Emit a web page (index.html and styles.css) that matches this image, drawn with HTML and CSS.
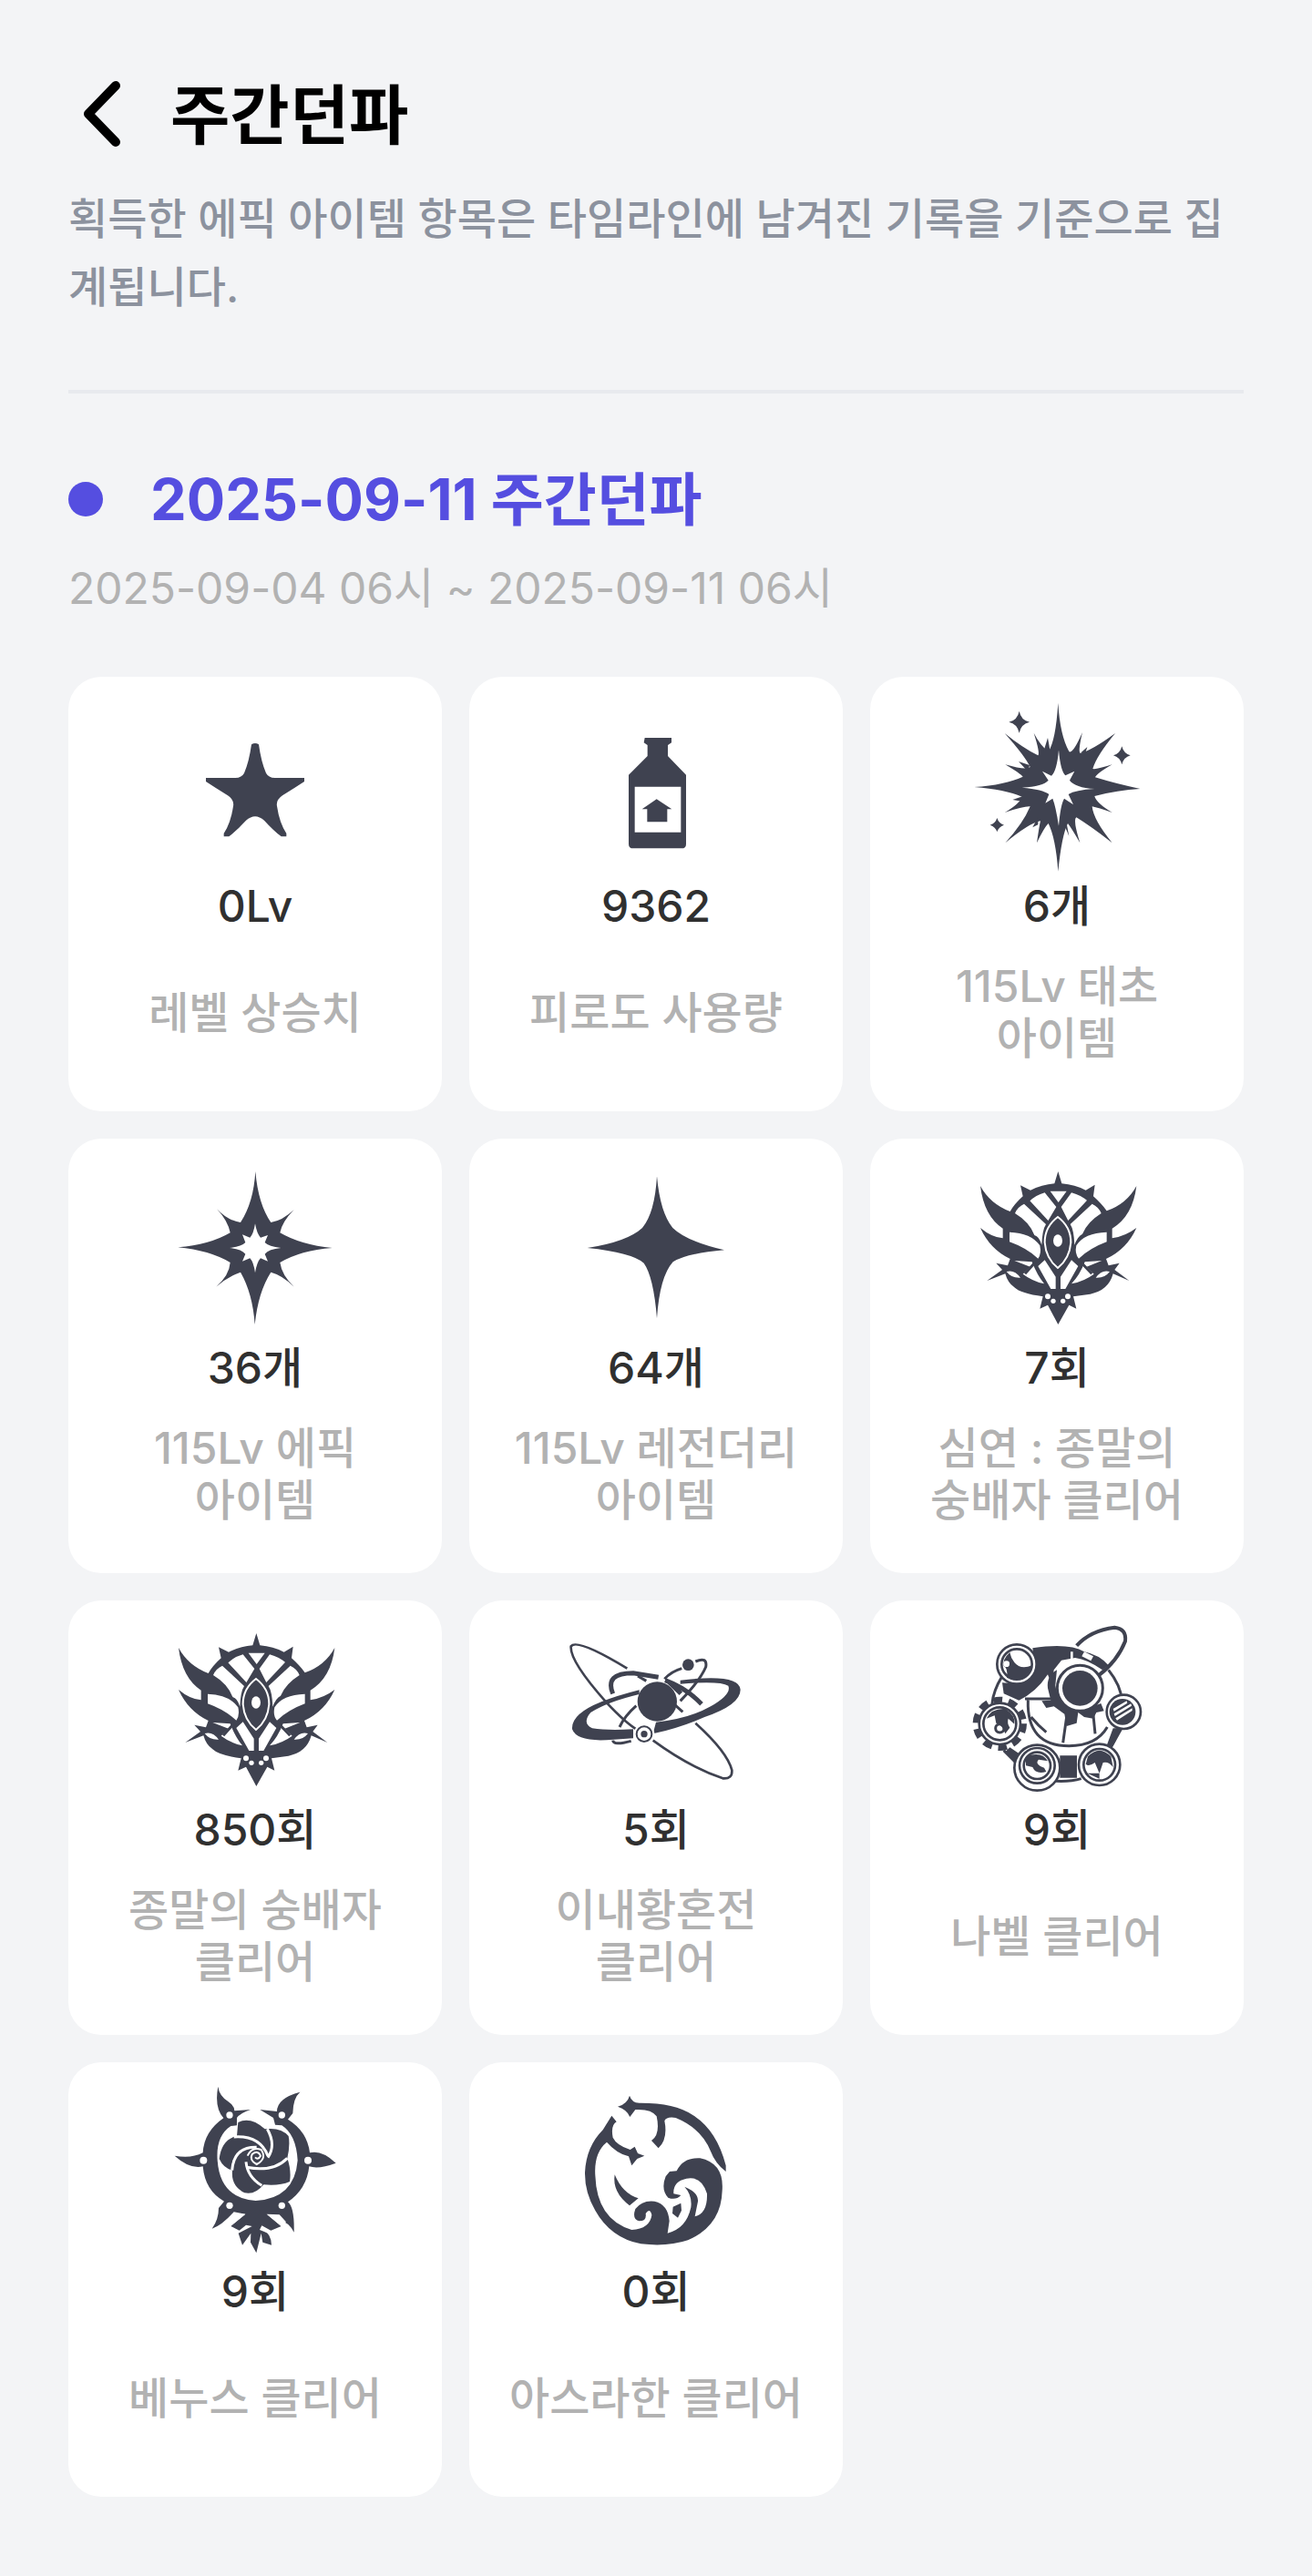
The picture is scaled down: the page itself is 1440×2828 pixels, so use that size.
FILE: index.html
```html
<!DOCTYPE html>
<html lang="ko">
<head>
    <meta charset="UTF-8">
    <meta name="viewport" content="width=device-width, initial-scale=1.0">
    <title>주간던파</title>
    <link rel="stylesheet" href="styles.css">
</head>
<body>
    <div class="container">
        <!-- Header -->
        <header class="header">
            <button class="back" type="button" aria-label="뒤로">
                <svg viewBox="0 0 50 80"><path d="M40 8 L10 39 L40 70"/></svg>
            </button>
            <h1>주간던파</h1>
        </header>
        <p class="description">획득한 에픽 아이템 항목은 타임라인에 남겨진 기록을 기준으로 집계됩니다.</p>

        <!-- Weekly record -->
        <section class="weekly">
            <h2>2025-09-11 주간던파</h2>
            <p class="period">2025-09-04 06시 ~ 2025-09-11 06시</p>

            <ul class="cards">
                <li class="card">
                    <svg class="icon" viewBox="-120 -51 720 600">
                        <path d="M228 112 Q240 104 252 112 Q260 170 276 206 Q284 221 305 222 L402 222 L402 234 Q370 255 330 280 Q308 295 312 315 Q320 370 343 405 L343 415 L326 415 Q300 395 270 362 Q240 335 210 362 Q180 395 154 415 L137 415 L137 405 Q160 370 168 315 Q172 295 150 280 Q110 255 78 234 L78 222 L175 222 Q196 221 204 206 Q220 170 228 112Z"/>
                    </svg>
                    <strong>0Lv</strong>
                    <span class="label">레벨 상승치</span>
                </li>
                <li class="card">
                    <svg class="icon" viewBox="-120 -51 720 600">
                        <path fill-rule="evenodd" d="M203 90 H291 V106 L279 114 V150 L339 212 V440 Q339 454 324 454 H165 Q150 454 150 440 V212 L212 150 V114 L200 106Z M170 251 V401 H322 V251Z M242 292 L292 325 H277 V367 H211 V325 H194Z"/>
                    </svg>
                    <strong>9362</strong>
                    <span class="label">피로도 사용량</span>
                </li>
                <li class="card">
                    <svg class="icon" viewBox="0 39 720 600">
                        <path d="M364 65 Q370 170 400 225 Q412 235 444 162 Q430 220 436 230 Q470 225 552 165 Q490 240 478 282 Q490 285 542 268 Q490 298 486 310 Q550 330 634 348 Q560 352 484 372 Q490 395 542 426 Q495 410 476 406 Q480 450 542 526 Q470 470 424 442 Q412 450 436 526 Q410 480 396 462 Q376 500 364 620 Q356 510 332 462 Q318 475 294 526 Q302 470 306 454 Q270 460 190 526 Q250 460 272 406 Q250 405 188 426 Q240 395 245 374 Q190 350 88 342 Q190 335 248 308 Q240 298 190 268 Q260 288 272 276 Q255 240 188 165 Q250 215 298 238 Q305 230 284 164 Q305 205 332 225 Q356 190 364 65Z"/>
                        <path d="M236 92 Q242 122 270 128 Q242 134 236 164 Q230 134 202 128 Q230 122 236 92Z M574 208 Q580 232 602 238 Q580 244 574 268 Q568 244 546 238 Q568 232 574 208Z M163 444 Q168 461 186 467 Q168 473 163 490 Q158 473 140 467 Q158 461 163 444Z M330 180 l8 45 h-22Z M440 228 l20 -18 l-8 26Z M234 258 l36 12 l-5 22Z M214 384 l35 -12 v18Z M280 475 l18 -35 v26Z M392 462 l8 42 l-16 -38Z"/>
                        <path class="cut" d="M366 220 Q372 290 388 304 L418 290 L402 320 Q420 344 484 348 Q420 352 398 366 L414 400 L384 380 Q372 400 366 470 Q356 405 346 380 L322 395 L334 366 Q315 350 245 344 Q315 340 332 320 L312 290 L342 305 Q360 290 366 220Z"/>
                    </svg>
                    <strong>6개</strong>
                    <span class="label">115Lv 태초<br>아이템</span>
                </li>
                <li class="card">
                    <svg class="icon" viewBox="0 30 720 600">
                        <path d="M361 78 Q370 185 412 246 Q450 240 488 204 Q448 245 442 280 Q510 320 614 330 Q510 338 442 378 Q448 420 488 458 Q450 420 412 410 Q370 475 359 582 Q352 480 312 410 Q270 425 232 458 Q275 420 278 378 Q210 338 106 328 Q210 320 278 280 Q270 240 234 202 Q270 240 312 246 Q355 180 361 78Z"/>
                        <path class="cut" d="M360 250 Q366 284 378 296 L402 288 L392 312 Q405 326 445 330 Q405 334 392 350 L402 374 L378 364 Q366 376 360 412 Q355 376 343 364 L318 374 L328 350 Q315 334 276 330 Q315 326 328 312 L318 286 L343 296 Q355 284 360 250Z"/>
                    </svg>
                    <strong>36개</strong>
                    <span class="label">115Lv 에픽<br>아이템</span>
                </li>
                <li class="card">
                    <svg class="icon" viewBox="-60 30 720 600">
                        <path d="M303 94 Q314 215 355 264 Q400 308 525 337 Q400 348 356 376 Q312 425 303 562 Q292 425 260 380 Q220 345 74 330 Q205 310 255 264 Q296 215 303 94Z"/>
                    </svg>
                    <strong>64개</strong>
                    <span class="label">115Lv 레전더리<br>아이템</span>
                </li>
                <li class="card">
                    <svg class="icon" viewBox="-30 0 720 600">
                        <g id="abyss">
                            <path d="M334 48 L346 88 Q390 92 425 110 L455 92 L450 130 Q478 155 494 178 Q560 155 592 96 Q580 195 512 236 V268 Q555 262 592 234 Q560 305 492 336 L500 358 L536 350 L520 372 L568 408 L515 385 Q500 440 440 452 L384 460 L394 500 L370 488 L334 552 L300 488 L274 500 L284 460 Q210 450 190 430 Q168 415 160 385 L100 408 L150 372 L130 350 L168 358 L176 336 Q110 305 78 234 Q115 265 152 268 V236 Q90 195 78 96 Q110 155 176 180 Q190 155 218 130 L210 94 L243 110 Q280 92 322 88Z"/>
                            <path class="cut" d="M290 118 Q260 126 238 148 L300 212 L328 165Z M308 113 H362 L335 150Z M378 118 Q410 126 434 148 L368 212 L344 165Z M222 155 Q200 165 192 186 Q240 215 256 258 Q272 262 280 290 Q282 240 294 222Z M446 155 Q468 165 476 186 Q430 215 414 254 Q398 262 388 290 Q386 240 374 222Z M174 248 Q245 250 274 292 Q280 320 268 335 Q230 300 174 280Z M494 248 Q420 250 394 292 Q388 320 402 335 Q440 300 494 280Z M190 342 L248 346 Q265 390 288 418 Q250 410 218 386 L242 362Z M478 342 L422 346 Q405 390 378 418 Q420 410 452 386 L428 362Z M164 378 Q190 370 210 398 Q180 400 164 378Z M504 378 Q478 370 458 398 Q488 400 504 378Z M268 360 L290 340 L326 395 V435 H310Z M400 360 L378 340 L342 395 V435 H358Z"/>
                            <path class="ring" d="M333 198 Q376 230 376 282 Q372 335 333 366 Q294 335 290 282 Q290 230 333 198Z"/>
                            <ellipse class="cut" cx="333" cy="276" rx="15" ry="20"/>
                            <path class="bar" d="M235 145 L300 215 M434 145 L368 215 M225 385 L256 350 M445 385 L412 350"/>
                            <g class="cut"><circle cx="300" cy="460" r="9"/><circle cx="366" cy="460" r="9"/><circle cx="318" cy="475" r="8"/><circle cx="350" cy="475" r="8"/></g>
                        </g>
                    </svg>
                    <strong>7회</strong>
                    <span class="label">심연 : 종말의<br>숭배자 클리어</span>
                </li>
                <li class="card">
                    <svg class="icon" viewBox="-30 0 720 600"><use href="#abyss"/></svg>
                    <strong>850회</strong>
                    <span class="label">종말의 숭배자<br>클리어</span>
                </li>
                <li class="card">
                    <svg class="icon" viewBox="0 -9 720 600">
                        <path fill-rule="evenodd" d="M440 194 Q635 170 638 225 Q638 275 520 315 Q440 350 350 370 L360 332 Q470 320 540 280 Q610 240 598 212 Q570 195 440 206Z M305 226 Q230 245 180 265 Q80 305 84 355 Q100 400 220 389 L285 385 L285 355 Q200 360 150 352 Q115 335 145 300 Q200 265 305 240Z"/>
                        <circle cx="364" cy="264" r="65"/>
                        <circle cx="466" cy="143" r="19"/>
                        <g class="line">
                            <path d="M265 155 Q100 55 80 82 Q75 130 195 265 Q260 335 300 358 M350 392 Q470 480 580 517 Q612 520 610 490 Q595 430 490 335"/>
                            <path class="thick" d="M218 238 Q190 170 285 170 L368 184 M390 194 Q460 220 510 272 M403 200 L442 238"/>
                            <path class="mid" d="M388 190 Q410 165 445 155 M490 132 Q530 115 524 150 Q505 195 440 262 M295 278 Q258 310 240 348 M218 392 Q220 410 278 394 M422 275 L448 298 M300 180 L328 196"/>
                        </g>
                        <circle class="cut" cx="321" cy="371" r="34"/>
                        <circle class="ring dark" cx="321" cy="371" r="25"/>
                        <circle cx="321" cy="371" r="11"/>
                    </svg>
                    <strong>5회</strong>
                    <span class="label">이내황혼전<br>클리어</span>
                </li>
                <li class="card">
                    <svg class="icon" viewBox="0 21 720 600">
                        <!-- outer body -->
                        <g class="line mid">
                            <path d="M180 210 Q150 260 147 300 M185 455 L230 500 M340 555 Q400 560 440 548 M530 190 Q570 240 574 290 M560 390 Q550 430 535 445"/>
                            <path d="M265 290 Q260 440 400 440 Q490 440 526 378 M275 345 Q300 375 325 395 M255 285 H345 M380 430 L392 345 M480 340 L486 400"/>
                        </g>
                        <path d="M280 118 Q400 100 450 130 Q500 140 530 175 L510 190 Q460 155 420 150 L375 158 L350 190 Q345 250 330 205 Q290 265 235 290 L185 268 L180 232 Q290 240 285 160Z"/>
                        <path d="M360 190 Q325 210 330 250 L340 290 L310 292 L325 315 L350 310 L385 335 L392 375 L425 365 L430 330 L450 345 L480 350 L490 330 L515 325 L505 300 L440 325 Q360 300 355 240Z"/>
                        <path class="line bold" d="M425 110 Q470 60 550 50 Q590 55 585 95 Q560 160 495 210"/>
                        <path d="M545 382 H578 L540 450 H520Z M370 472 H426 V545 H370Z M205 445 L235 465 L225 500 L190 460Z"/>
                        <path class="cut" d="M450 130 L480 145 L472 160 L442 145Z M405 130 h8 v25 h-8Z"/>
                        <circle cx="436" cy="250" r="77" class="cut"/>
                        <circle cx="436" cy="250" r="75" class="line mid"/>
                        <circle cx="436" cy="250" r="58"/>
                        <!-- satellites -->
                        <g class="disc"><circle cx="228" cy="171" r="65"/><circle cx="228" cy="171" r="50"/></g>
                        <path d="M205 132 Q180 155 185 177 Q200 185 195 215 Q240 235 270 195 L278 175 Q240 190 220 165 Q208 150 205 132Z"/>
                        <circle class="cut" cx="194" cy="170" r="10"/>
                        <circle class="teeth" cx="172" cy="367" r="76"/>
                        <g class="disc"><circle cx="172" cy="367" r="68"/><circle cx="172" cy="367" r="54"/></g>
                        <path d="M128 350 Q145 315 190 318 Q225 340 220 368 L200 350 Q195 365 205 380 L190 400 Q180 370 160 365 L155 340Z"/>
                        <circle class="line mid" cx="172" cy="382" r="14"/>
                        <g class="disc"><circle cx="580" cy="328" r="56"/></g>
                        <circle cx="576" cy="328" r="43"/>
                        <path class="cut" d="M545 318 L590 292 L592 299 L548 326Z M548 334 L604 301 L606 308 L551 342Z M553 349 L608 316 L608 324 L558 356Z"/>
                        <g class="disc"><circle cx="295" cy="512" r="75"/><circle cx="295" cy="505" r="58"/><circle cx="295" cy="505" r="44"/></g>
                        <path d="M258 475 Q310 455 330 490 L300 485 Q285 500 318 512 L325 525 Q290 535 280 510 L258 505Z"/>
                        <g class="disc"><circle cx="500" cy="502" r="68"/><circle cx="500" cy="502" r="52"/></g>
                        <path d="M462 475 Q500 435 538 475 L545 510 Q530 490 512 495 L500 530 L485 495 Q465 510 455 500Z M460 530 H500 V548Z"/>
                    </svg>
                    <strong>9회</strong>
                    <span class="label">나벨 클리어</span>
                </li>
                <li class="card">
                    <svg class="icon" viewBox="0 42 720 600">
                        <path d="M238 62 Q242 92 270 110 Q292 125 292 142 L345 138 Q310 150 300 165 L300 190 L280 192 Q230 225 236 305 Q245 430 362 438 Q490 430 500 305 Q495 220 448 190 L426 188 L420 165 L376 138 L432 144 Q432 100 508 80 Q485 100 484 150 L468 170 Q532 210 540 280 Q580 270 626 314 Q570 335 538 325 Q530 400 468 442 Q490 460 488 542 Q465 500 440 510 L398 482 L420 500 L446 522 L412 536 L382 520 L375 534 L390 540 Q412 545 414 584 L385 575 L380 545 L364 610 L345 575 L346 545 L318 584 L305 545 L350 522 L330 518 L308 536 L280 522 L328 482 L290 475 Q250 520 218 530 Q240 500 240 462 L258 440 Q195 405 188 325 Q145 335 95 290 Q150 300 188 280 Q192 210 256 166 Q225 130 238 62Z"/>
                        <path class="cut" d="M288 480 L328 482 L278 522 L265 508Z M398 482 L440 484 L462 508 L446 522Z"/>
                        <g class="cut"><circle cx="276" cy="156" r="11"/><circle cx="448" cy="156" r="11"/><circle cx="190" cy="305" r="12"/><circle cx="534" cy="305" r="12"/><circle cx="276" cy="454" r="11"/><circle cx="448" cy="454" r="11"/></g>
                        <!-- rose -->
                        <path d="M304 180 Q345 160 392 202 Q445 195 470 225 Q476 255 466 298 Q480 340 474 375 Q440 390 388 385 Q360 420 325 412 Q280 390 285 338 Q255 330 242 300 Q250 235 300 225Z"/>
                        <path class="petal" d="M290 228 Q375 222 402 290 M400 202 Q430 255 402 296 M466 298 Q420 345 332 328 M382 388 Q335 360 330 310 M284 338 Q290 260 365 262"/>
                        <path class="petal thin" d="M335 290 Q350 258 380 270 Q400 300 365 318 Q340 305 350 285 Q370 270 378 290 Q370 305 360 295"/>
                    </svg>
                    <strong>9회</strong>
                    <span class="label">베누스 클리어</span>
                </li>
                <li class="card">
                    <svg class="icon" viewBox="-30 12 720 600">
                        <path d="M243 62 Q250 85 275 86 Q390 85 450 125 Q530 175 560 292 V312 Q525 285 510 245 Q480 170 395 135 Q365 130 358 145 Q370 205 338 235 L315 210 Q345 190 332 130 Q315 105 262 108 L244 132 Q235 108 204 98 Q235 90 243 62Z"/>
                        <path d="M184 128 L200 148 Q180 160 188 200 Q200 225 245 240 L260 230 L270 252 L292 260 L268 270 L250 292 L240 262 Q200 252 168 215 Q125 250 130 325 Q135 470 250 504 Q310 500 316 455 Q310 430 296 450 Q300 475 275 475 Q250 470 262 435 Q285 405 325 410 Q370 420 374 475 L368 515 Q430 500 445 430 Q450 390 424 362 Q470 380 468 410 L458 460 Q500 450 498 385 Q480 325 430 335 Q385 345 388 385 L412 390 Q395 408 370 398 Q345 370 362 328 L375 312 L398 310 Q420 265 475 268 Q555 285 548 375 Q545 490 435 538 Q370 560 280 550 Q180 530 130 440 Q95 380 96 315 Q100 230 155 175Z"/>
                        <path d="M194 322 Q220 385 272 400 L243 424 Q185 380 194 322Z M386 428 L412 416 L414 440 L402 464 L384 450Z"/>
                    </svg>
                    <strong>0회</strong>
                    <span class="label">아스라한 클리어</span>
                </li>
            </ul>
        </section>
    </div>
</body>
</html>
```

FILE: styles.css
```css
* {
    box-sizing: border-box;
}
body {
    font-family: Inter, 'Noto Sans CJK KR', sans-serif;
    background-color: #f3f4f6;
    margin: 0;
    color: #000;
}
.container {
    padding: 80px 75px 87px;
}
h1, h2, p, ul {
    margin: 0;
    padding: 0;
}

/* Header */
.header {
    display: flex;
    align-items: center;
    gap: 50px;
    height: 92px;
    padding-left: 12px;
}
.back {
    display: flex;
    width: 50px;
    height: 80px;
    padding: 0;
    border: 0;
    background: none;
    cursor: pointer;
}
.back svg {
    width: 50px;
    height: 80px;
    fill: none;
    stroke: #000;
    stroke-width: 10;
    stroke-linecap: round;
    stroke-linejoin: round;
}
h1 {
    font-size: 71px;
    font-weight: 700;
    line-height: 92px;
}
.description {
    margin-top: 30px;
    font-size: 47px;
    font-weight: 500;
    line-height: 75px;
    color: #8c929e;
}

/* Weekly record */
.weekly {
    margin-top: 76px;
    padding-top: 76px;
    border-top: 4px solid #e8eaee;
}
h2 {
    display: flex;
    align-items: center;
    gap: 52px;
    font-size: 63px;
    font-weight: 700;
    line-height: 80px;
    color: #554ee0;
}
h2::before {
    content: "";
    width: 38px;
    height: 38px;
    border-radius: 50%;
    background: #554ee0;
}
.period {
    margin-top: 28px;
    font-size: 48px;
    line-height: 60px;
    color: #b2b2b2;
}

/* Cards */
.cards {
    display: grid;
    grid-template-columns: repeat(3, 1fr);
    gap: 30px;
    margin-top: 67px;
    list-style: none;
}
.card {
    display: flex;
    flex-direction: column;
    align-items: center;
    padding: 20px 10px 52px;
    border-radius: 36px;
    background: #fff;
    text-align: center;
}
.card strong {
    font-size: 48px;
    font-weight: 500;
    line-height: 64px;
    color: #303030;
}
.label {
    display: flex;
    flex-direction: column;
    justify-content: center;
    min-height: 114px;
    margin-top: 27px;
    font-size: 48px;
    font-weight: 500;
    line-height: 57px;
    color: #b2b2b2;
}

/* Icons */
.icon {
    width: 240px;
    height: 200px;
    fill: #3f4250;
}
.icon .cut {
    fill: #fff;
}
.icon .ring {
    fill: none;
    stroke: #fff;
    stroke-width: 6;
}
.icon .dark {
    stroke: #3f4250;
}
.icon .bar {
    fill: none;
    stroke: #3f4250;
    stroke-width: 9;
}
.icon .line {
    fill: none;
    stroke: #3f4250;
    stroke-width: 8;
}
.icon .mid {
    stroke-width: 9;
}
.icon .thick {
    stroke-width: 15;
}
.icon .bold {
    stroke-width: 12;
}
.icon .disc {
    fill: #fff;
    stroke: #3f4250;
    stroke-width: 8;
}
.icon .teeth {
    fill: none;
    stroke: #3f4250;
    stroke-width: 26;
    stroke-dasharray: 28 20;
}
.icon .petal {
    fill: none;
    stroke: #fff;
    stroke-width: 9;
}
.icon .thin {
    stroke-width: 6;
}
```
